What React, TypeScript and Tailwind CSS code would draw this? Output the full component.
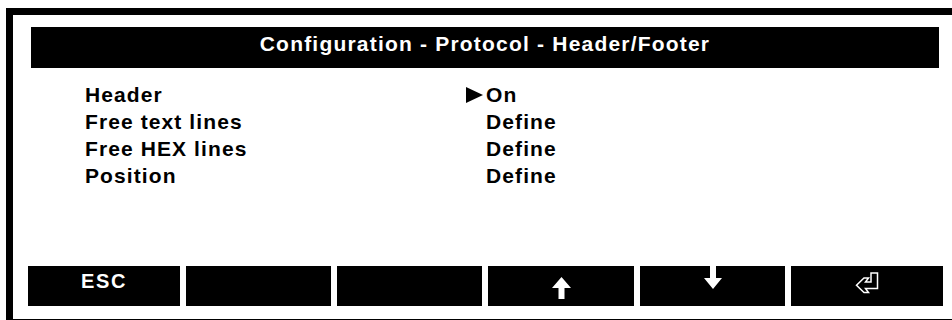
const rows = [
  { label: "Header", value: "On", selected: true },
  { label: "Free text lines", value: "Define" },
  { label: "Free HEX lines", value: "Define" },
  { label: "Position", value: "Define" },
];

function Pointer() {
  return (
    <svg width="17" height="16" viewBox="0 0 17 16">
      <path d="M0 0 L17 8 L0 16 Z" fill="black" />
    </svg>
  );
}

function UpArrow() {
  return (
    <svg width="19" height="22" viewBox="0 0 19 22">
      <path d="M9.5 0 L19 11 L12.5 11 L12.5 22 L6.5 22 L6.5 11 L0 11 Z" fill="white" />
    </svg>
  );
}

function DownArrow() {
  return (
    <svg width="18" height="23" viewBox="0 0 18 23">
      <path d="M6 0 L12 0 L12 12 L18 12 L9 23 L0 12 L6 12 Z" fill="white" />
    </svg>
  );
}

function EnterIcon() {
  return (
    <svg width="25" height="22" viewBox="0 0 25 22">
      <path
        d="M16 1 L22.5 1 L22.5 16.5 L10.5 16.5 L13.5 20.5 L9 20.5 L1.5 13.2 L9 6 L13.5 6 L10.5 10 L16 10 Z"
        fill="black"
        stroke="white"
        strokeWidth="1.5"
        strokeLinejoin="miter"
      />
    </svg>
  );
}

export default function App() {
  return (
    <div
      className="w-[952px] h-[320px] bg-white pt-2 pl-[6px] overflow-hidden"
      style={{ fontFamily: '"Liberation Sans", Arial, sans-serif' }}
    >
      <div className="h-[312px] border-t-[7px] border-l-[7px] border-b border-black flex flex-col">
        <div className="ml-[18px] mt-3 w-[908px] h-[41px] bg-black text-white flex items-start justify-center pt-[2px] font-bold text-[21px] leading-[30px] tracking-[1.2px]">
          Configuration - Protocol - Header/Footer
        </div>

        <div className="ml-[72px] mt-[13px] flex flex-col font-bold text-[21px] leading-[30px] tracking-[1.1px] text-black">
          {rows.map((row) => (
            <div key={row.label} className="flex h-[27px] items-center">
              <span className="w-[381px]">{row.label}</span>
              <span className="w-5 flex items-center">{row.selected ? <Pointer /> : null}</span>
              <span>{row.value}</span>
            </div>
          ))}
        </div>

        <div className="mt-auto mb-[13px] ml-[15px] flex gap-[6px] h-10">
          <div className="w-[152px] bg-black text-white font-bold text-[20px] leading-[30px] tracking-[1.7px] flex justify-center">
            ESC
          </div>
          <div className="w-[145px] bg-black" />
          <div className="w-[145px] bg-black" />
          <div className="w-[146px] bg-black flex justify-center items-start pt-[11px]">
            <UpArrow />
          </div>
          <div className="w-[145px] bg-black flex justify-center items-start">
            <DownArrow />
          </div>
          <div className="w-[152px] bg-black flex justify-center items-start pt-[6px]">
            <EnterIcon />
          </div>
        </div>
      </div>
    </div>
  );
}
